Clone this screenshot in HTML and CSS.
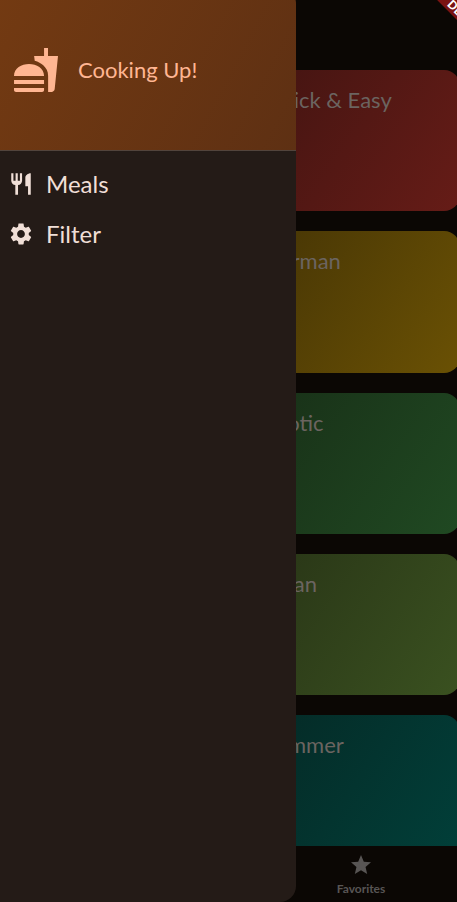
FILE: index.html
```html
<!DOCTYPE html>
<html lang="en">
<head>
<meta charset="utf-8">
<meta name="viewport" content="width=device-width, initial-scale=1">
<title>Cooking Up!</title>
<link rel="stylesheet" href="styles.css">
</head>
<body>
<div class="app">
  <main class="grid">
    <a href="#quick" class="card red">Quick &amp; Easy</a>
    <a href="#german" class="card amber">German</a>
    <a href="#exotic" class="card green">Exotic</a>
    <a href="#asian" class="card lime">Asian</a>
    <a href="#summer" class="card teal">Summer</a>
  </main>
  <nav class="tabs" aria-label="Sections">
    <a href="#favorites" class="tab">
      <svg class="tab-icon" viewBox="0 0 24 24" aria-hidden="true"><path d="M12 17.27L18.18 21l-1.64-7.03L22 9.24l-7.19-.61L12 2 9.19 8.63 2 9.24l5.46 4.73L5.82 21z"/></svg>
      Favorites
    </a>
  </nav>
  <div class="banner">DEBUG</div>
  <aside class="drawer">
    <header class="drawer-header">
      <svg class="logo" viewBox="0 0 24 24" aria-hidden="true"><path d="M18.06 22.99h1.66c.84 0 1.53-.64 1.63-1.46L23 5.05h-5V1h-1.97v4.05h-4.97l.3 2.34c1.71.47 3.31 1.32 4.27 2.26 1.44 1.42 2.43 2.89 2.43 5.29v8.05zM1 21.99V21h15.03v.99c0 .55-.45 1-1.01 1H2.01c-.56 0-1.01-.45-1.01-1zm15.03-7c0-8-15.03-8-15.03 0h15.03zM1.02 17h15v2h-15z"/></svg>
      <span>Cooking Up!</span>
    </header>
    <nav class="menu" aria-label="Main menu">
      <a href="#meals" class="menu-item">
        <svg class="menu-icon" viewBox="0 0 24 24" aria-hidden="true"><path d="M11 9H9V2H7v7H5V2H3v7c0 2.12 1.66 3.84 3.75 3.97V22h2.5v-9.03C11.34 12.84 13 11.12 13 9V2h-2v7zm5-3v8h2.5v8H21V2c-2.76 0-5 2.24-5 4z"/></svg>
        Meals
      </a>
      <a href="#filter" class="menu-item">
        <svg class="menu-icon" viewBox="0 0 24 24" aria-hidden="true"><path d="M19.14 12.94c.04-.3.06-.61.06-.94 0-.32-.02-.64-.07-.94l2.03-1.58c.18-.14.23-.41.12-.61l-1.92-3.32c-.12-.22-.37-.29-.59-.22l-2.39.96c-.5-.38-1.03-.7-1.62-.94l-.36-2.54c-.04-.24-.24-.41-.48-.41h-3.84c-.24 0-.43.17-.47.41l-.36 2.54c-.59.24-1.13.57-1.62.94l-2.39-.96c-.22-.08-.47 0-.59.22L2.74 8.87c-.12.21-.08.47.12.61l2.03 1.58c-.05.3-.09.63-.09.94s.02.64.07.94l-2.03 1.58c-.18.14-.23.41-.12.61l1.92 3.32c.12.22.37.29.59.22l2.39-.96c.5.38 1.03.7 1.62.94l.36 2.54c.05.24.24.41.48.41h3.84c.24 0 .44-.17.47-.41l.36-2.54c.59-.24 1.13-.56 1.62-.94l2.39.96c.22.08.47 0 .59-.22l1.92-3.32c.12-.22.07-.47-.12-.61l-2.01-1.58zM12 15.6c-1.98 0-3.6-1.62-3.6-3.6s1.62-3.6 3.6-3.6 3.6 1.62 3.6 3.6-1.62 3.6-3.6 3.6z"/></svg>
        Filter
      </a>
    </nav>
  </aside>
</div>
</body>
</html>
```

FILE: styles.css
```css
* {
  box-sizing: border-box;
}

body {
  margin: 0;
  background: #0b0704;
  font-family: Lato, "Liberation Sans", sans-serif;
}

a {
  color: inherit;
  text-decoration: none;
}

svg {
  display: block;
  flex: none;
  fill: currentColor;
}

.app {
  position: relative;
  display: flex;
  flex-direction: column;
  height: 100vh;
  overflow: hidden;
}

/* The screen behind the drawer is a little wider than the window. */
.grid {
  flex: 1;
  min-height: 0;
  display: grid;
  grid-template-columns: 1fr 1fr;
  align-content: start;
  gap: 20px;
  margin: 70px -3px 0 16px;
  overflow: hidden;
}

.card {
  grid-column: 2;
  aspect-ratio: 3 / 2;
  padding: 16px;
  border-radius: 16px;
  color: #6b6460;
  font-size: 22px;
  line-height: 28px;
}

.red {
  background: linear-gradient(124deg, #421411, #661c17);
}

.amber {
  background: linear-gradient(124deg, #453405, #6a5104);
}

.green {
  background: linear-gradient(124deg, #182f17, #204922);
}

.lime {
  background: linear-gradient(124deg, #283416, #3a5120);
}

.teal {
  background: linear-gradient(124deg, #052925, #013f39);
}

.tabs {
  flex: none;
  display: grid;
  grid-template-columns: 1fr 1fr;
  height: 56px;
  margin: 0 -27px 0 -8px;
}

.tab {
  grid-column: 2;
  display: flex;
  flex-direction: column;
  align-items: center;
  gap: 4px;
  padding-top: 7px;
  color: #585554;
  font-size: 12px;
  font-weight: 700;
  line-height: 16px;
}

.tab-icon {
  width: 24px;
  height: 24px;
}

.banner {
  position: absolute;
  top: 10px;
  right: -55px;
  width: 96px;
  background: #7a1312;
  color: #fff;
  font-size: 12px;
  font-weight: 900;
  line-height: 14px;
  text-align: center;
  transform: rotate(45deg);
}

.drawer {
  position: absolute;
  top: -12px;
  bottom: 0;
  left: 0;
  width: 296px;
  overflow: hidden;
  border-radius: 0 16px 16px 0;
  background: #241b17;
}

.drawer-header {
  display: flex;
  align-items: center;
  gap: 18px;
  height: 163px;
  padding: 2px 12px 0;
  border-bottom: 1px solid #52443c;
  background: linear-gradient(118deg, #733a12, #5e3013);
  color: #ffb692;
  font-size: 22px;
  line-height: 28px;
}

.logo {
  width: 48px;
  height: 48px;
}

.menu {
  padding-top: 8px;
}

.menu-item {
  display: flex;
  align-items: center;
  gap: 12px;
  height: 50px;
  padding: 0 8px;
  color: #f0dfd7;
  font-size: 24px;
  line-height: 32px;
}

.menu-icon {
  width: 26px;
  height: 26px;
}
```
